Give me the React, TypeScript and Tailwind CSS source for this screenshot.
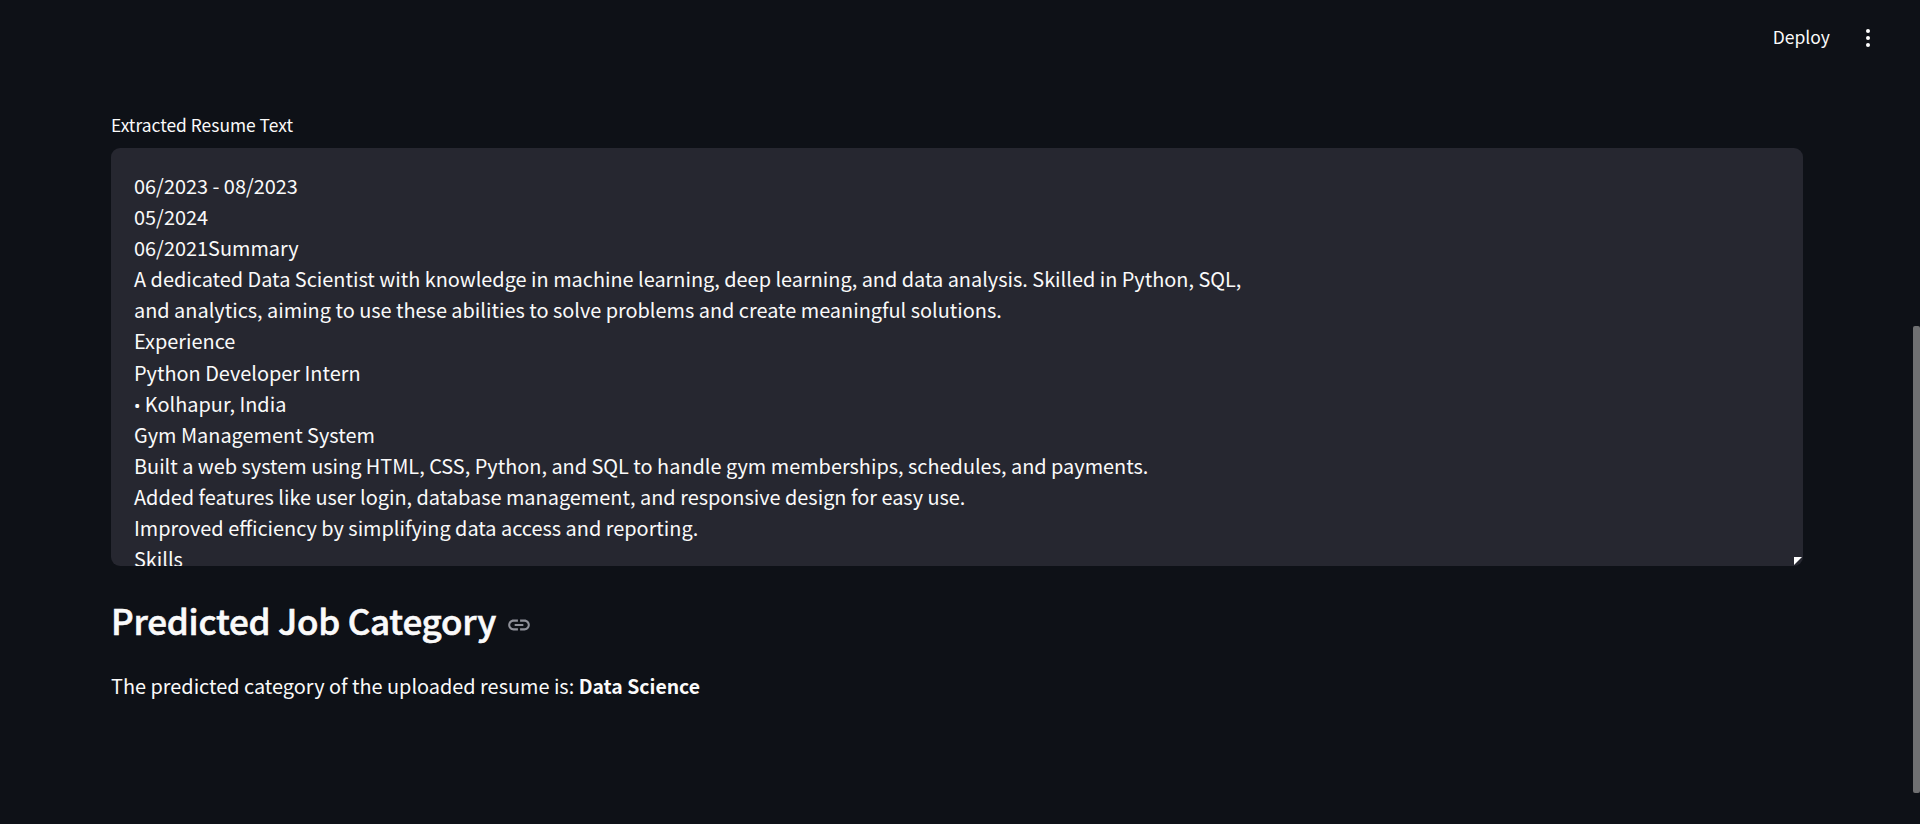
import React from 'react';

const resumeLines = [
  '06/2023 - 08/2023',
  '05/2024',
  '06/2021Summary',
  'A dedicated Data Scientist with knowledge in machine learning, deep learning, and data analysis. Skilled in Python, SQL,',
  'and analytics, aiming to use these abilities to solve problems and create meaningful solutions.',
  'Experience',
  'Python Developer Intern',
  '',
  'Gym Management System',
  'Built a web system using HTML, CSS, Python, and SQL to handle gym memberships, schedules, and payments.',
  'Added features like user login, database management, and responsive design for easy use.',
  'Improved efficiency by simplifying data access and reporting.',
  'Skills',
];

const App: React.FC = () => {
  return (
    <div className="relative h-screen overflow-hidden bg-[#0e1117] text-[#fafafa] font-['Noto_Sans_CJK_SC','Noto_Sans',sans-serif]">
      {/* top bar */}
      <header className="flex h-[75px] items-center justify-end pr-[50px]">
        <span className="mr-[36px] text-[17.5px]">Deploy</span>
        <div className="flex flex-col gap-[3px]">
          <span className="h-[4px] w-[4px] rounded-full bg-white"></span>
          <span className="h-[4px] w-[4px] rounded-full bg-white"></span>
          <span className="h-[4px] w-[4px] rounded-full bg-white"></span>
        </div>
      </header>

      <main className="ml-[111px] w-[1692px] pt-[38px]">
        <div className="mb-[11px] h-[24px] text-[17.4px] leading-[24px]">Extracted Resume Text</div>

        <div className="relative h-[418px] overflow-hidden rounded-[9px] bg-[#262730] px-[23px] pt-[22px] text-[19.9px] leading-[31.1px]">
          {resumeLines.map((line, i) =>
            line ? (
              <div key={i} className="h-[31.1px] whitespace-pre">{line}</div>
            ) : (
              <div key={i} className="h-[31.1px] whitespace-pre">
                <span className="font-['Noto_Sans',sans-serif] text-[17px] leading-none">•</span> Kolhapur, India
              </div>
            ),
          )}
          {/* resize handle */}
          <svg className="absolute bottom-[1px] right-[1px]" width="8" height="8" viewBox="0 0 8 8">
            <path d="M0 0H8L0 8Z" fill="#ffffff" />
          </svg>
        </div>

        <div className="mt-[25px] flex h-[58px] items-center">
          <h2 className="text-[35px] font-medium leading-[58px] tracking-[-0.23px] [-webkit-text-stroke:0.6px_#fafafa]">Predicted Job Category</h2>
          <svg className="ml-[10px] mt-[9px]" width="26" height="26" viewBox="0 0 24 24" fill="#8e9099">
            <path d="M3.9 12c0-1.71 1.39-3.1 3.1-3.1h4V7H7c-2.76 0-5 2.24-5 5s2.24 5 5 5h4v-1.9H7c-1.71 0-3.1-1.39-3.1-3.1zM8 13h8v-2H8v2zm9-6h-4v1.9h4c1.71 0 3.1 1.39 3.1 3.1s-1.39 3.1-3.1 3.1h-4V17h4c2.76 0 5-2.24 5-5s-2.24-5-5-5z" />
          </svg>
        </div>

        <p className="mt-[21px] text-[19.9px] leading-[31px]">
          The predicted category of the uploaded resume is: <strong className="font-bold text-[19.4px]">Data Science</strong>
        </p>
      </main>

      {/* page scrollbar */}
      <div className="absolute right-0 top-[326px] h-[467px] w-[7px] rounded-[2px] bg-[#6f7072]"></div>
    </div>
  );
};

export default App;
